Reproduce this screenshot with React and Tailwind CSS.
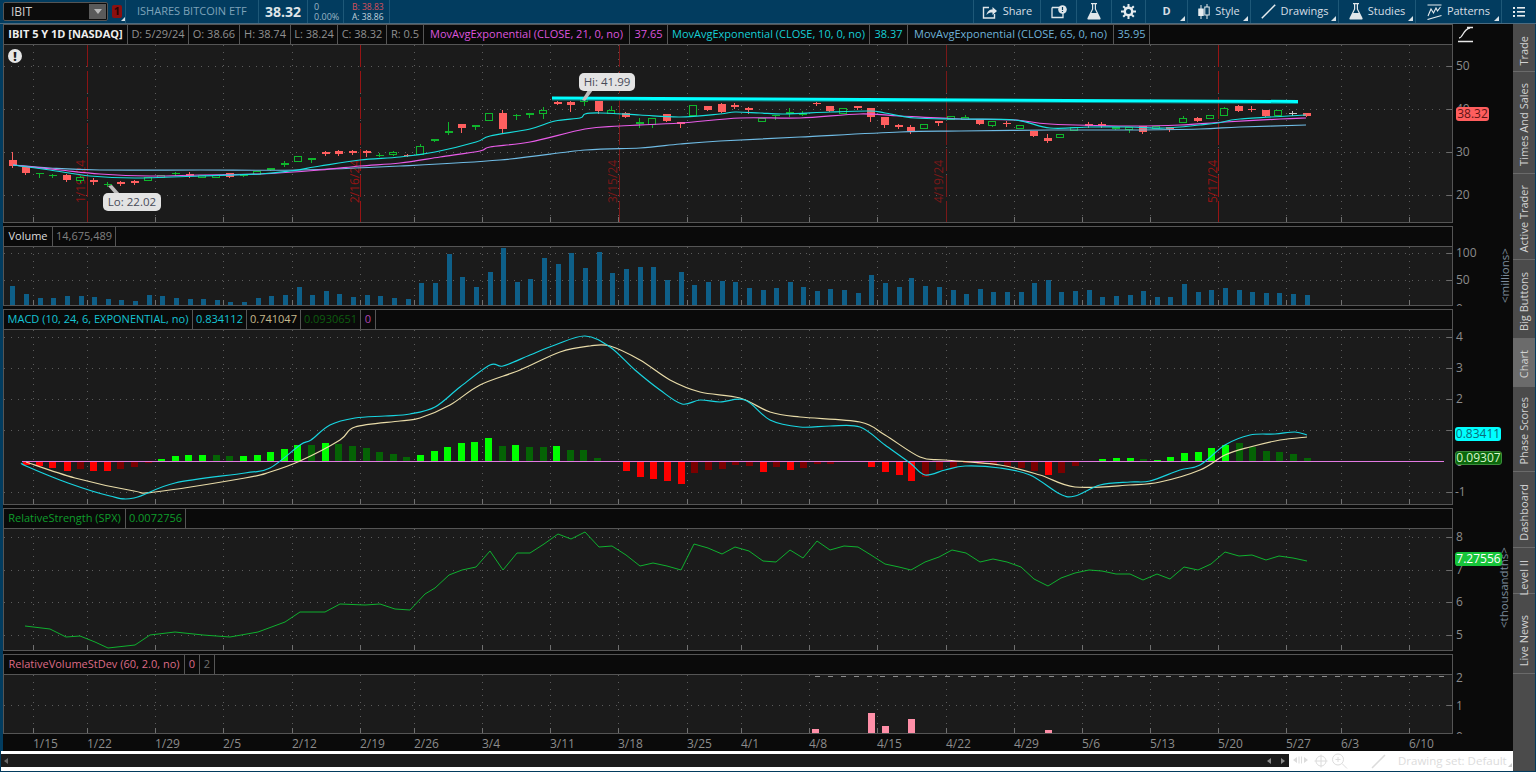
import React from "react";

const DATES = [
  ["1/15", 33], ["1/22", 87], ["1/29", 155], ["2/5", 223], ["2/12", 292], ["2/19", 360], ["2/26", 414], ["3/4", 482],
  ["3/11", 550], ["3/18", 618], ["3/25", 687], ["4/1", 741], ["4/8", 809], ["4/15", 877], ["4/22", 946], ["4/29", 1014],
  ["5/6", 1082], ["5/13", 1150], ["5/20", 1218], ["5/27", 1286], ["6/3", 1341], ["6/10", 1409],
];

// x, body top, body bottom, wick top, wick bottom, kind (r red, g solid green, h hollow, d/n/w doji)
const CANDLES = [
  [13,160,166,152,167,"r"],[26,167,173,167,174,"r"],[40,173,173,173,177,"n"],[53,175,175,174,177,"n"],[67,175,180,174,181,"r"],
  [81,177,180,176,182,"h"],[94,180,182,178,184,"r"],[108,184,184,182,186,"n"],[121,182,184,181,185,"r"],[135,181,183,180,184,"r"],
  [149,177,180,177,180,"h"],[162,175,177,175,177,"h"],[176,173,173,172,175,"n"],[190,174,176,172,177,"r"],[203,175,177,175,177,"h"],
  [217,175,177,175,177,"h"],[230,173,177,173,177,"r"],[244,175,175,174,176,"n"],[258,171,174,171,174,"h"],[271,168,170,168,170,"g"],
  [285,163,165,161,166,"g"],[299,156,161,156,161,"h"],[312,158,160,158,162,"g"],[326,152,154,151,155,"r"],[339,151,154,150,155,"r"],
  [353,151,153,150,154,"r"],[367,151,153,150,156,"r"],[380,155,155,153,156,"n"],[394,152,154,151,155,"h"],[408,155,155,154,156,"d"],
  [421,146,154,144,154,"h"],[435,139,141,139,141,"g"],[449,131,133,122,134,"g"],[462,124,128,124,132,"r"],[476,125,127,125,129,"g"],
  [490,113,120,113,120,"h"],[503,113,129,110,133,"r"],[517,115,115,114,119,"n"],[530,113,115,113,117,"g"],[544,110,113,107,118,"h"],
  [558,102,104,101,104,"r"],[571,102,105,101,111,"r"],[585,99,101,97,105,"h"],[599,101,111,101,113,"r"],[612,110,113,106,113,"h"],
  [626,113,117,112,117,"r"],[640,122,124,118,127,"g"],[653,118,124,118,127,"h"],[667,114,121,114,121,"r"],[681,122,123,122,127,"r"],
  [694,105,115,105,115,"h"],[708,106,110,106,110,"r"],[722,104,112,103,112,"r"],[735,105,107,103,108,"r"],[749,108,110,107,113,"r"],
  [763,118,121,118,121,"h"],[776,115,115,115,119,"n"],[790,112,114,108,116,"g"],[803,113,115,111,115,"g"],[817,103,103,102,105,"d"],
  [830,106,111,106,111,"r"],[844,108,113,108,113,"h"],[858,106,108,106,109,"r"],[871,108,117,108,121,"r"],[885,117,125,117,127,"r"],
  [899,125,127,124,128,"r"],[911,127,131,125,133,"r"],[925,124,128,124,128,"h"],[939,121,123,121,125,"r"],[952,116,119,116,119,"h"],
  [966,117,119,115,119,"h"],[980,119,124,119,124,"r"],[993,121,125,121,126,"h"],[1007,123,123,121,126,"d"],[1021,125,128,125,128,"h"],
  [1034,131,136,131,136,"r"],[1048,138,141,134,142,"r"],[1061,134,137,134,137,"h"],[1075,127,130,127,130,"h"],[1089,124,126,122,127,"r"],
  [1102,124,126,122,127,"r"],[1116,127,129,127,129,"g"],[1130,127,129,127,132,"h"],[1143,126,132,126,133,"r"],[1157,126,127,126,127,"h"],
  [1170,127,129,127,131,"r"],[1184,118,122,116,122,"h"],[1198,118,121,117,121,"r"],[1211,115,118,115,118,"h"],[1225,108,115,107,115,"h"],
  [1239,106,111,105,111,"r"],[1252,109,109,106,111,"d"],[1266,110,116,110,116,"r"],[1279,110,115,110,115,"h"],[1293,113,113,111,115,"w"],
  [1307,113,116,113,116,"r"],
];

const EMA10 = [[13,165],[50,170],[90,176],[135,178],[200,176],[260,174],[290,171],[320,166],[360,160],[400,157],[435,152],[476,142],[490,136],[530,129],[555,121],[580,118],[585,114],[600,113],[640,115],[680,117],[720,114],[735,112],[760,113],[785,114],[830,112],[870,111],[885,113],[915,118],[960,119],[1015,120],[1050,128],[1090,127],[1130,127],[1165,128],[1200,125],[1218,123],[1240,119],[1306,115]];
const EMA21 = [[13,165],[60,170],[100,174],[150,176],[200,175],[260,174],[320,170],[360,166],[400,163],[440,157],[480,151],[490,147],[530,142],[585,129],[620,126],[680,123],[740,118],[800,118],[860,114],[900,116],[960,119],[1015,120],[1050,124],[1130,126],[1180,125],[1225,122],[1280,119],[1306,118]];
const EMA65 = [[13,165],[50,168],[100,170],[200,170],[300,170],[400,166],[500,160],[585,150],[640,148],[680,144],[720,141],[800,137],[900,132],[960,131],[1050,130],[1130,130],[1200,129],[1240,127],[1306,125]];

const VOLUME = [[12,286],[26,294],[40,298],[53,298],[67,296],[81,296],[94,297],[108,299],[121,300],[135,301],[149,295],[162,296],[176,298],[190,299],[203,299],[217,300],[230,302],[244,302],[258,298],[271,296],[285,295],[299,287],[312,295],[326,291],[339,294],[353,297],[367,295],[380,296],[394,298],[408,299],[421,283],[435,283],[449,254],[462,277],[476,287],[490,272],[503,248],[517,282],[530,279],[544,258],[558,264],[571,253],[585,268],[599,252],[612,273],[626,269],[640,267],[653,267],[667,280],[681,272],[694,285],[708,282],[722,281],[735,282],[749,288],[763,290],[776,288],[790,282],[803,287],[817,291],[830,289],[844,290],[858,293],[871,275],[885,283],[899,287],[911,278],[925,286],[939,287],[953,290],[966,294],[980,289],[993,292],[1007,292],[1021,292],[1034,283],[1048,280],[1061,292],[1075,291],[1089,290],[1102,297],[1116,296],[1130,295],[1143,291],[1157,297],[1170,297],[1184,284],[1198,292],[1211,290],[1225,288],[1239,290],[1252,292],[1266,293],[1279,293],[1293,294],[1307,295]];

// x, height above/below the zero line, dim
const HIST = [[26,-4],[39,-5],[52,-7],[67,-10],[80,-8,1],[93,-10],[107,-10],[120,-8,1],[134,-6,1],[148,-2,1],[161,2],[175,5],[188,6],[202,6],[216,6,1],[229,5,1],[243,5],[257,6],[270,9],[284,12],[297,16],[311,16,1],[325,18],[338,17,1],[352,15,1],[366,13,1],[379,9,1],[393,7,1],[406,4,1],[420,6],[434,10],[447,14],[461,18],[474,19],[488,23],[502,15,1],[515,16],[529,14,1],[543,14,1],[556,15],[570,11,1],[583,11,1],[597,3,1],[612,-1,1],[626,-10],[640,-16],[653,-18],[667,-20],[681,-23],[694,-12,1],[708,-9,1],[722,-8,1],[735,-4,1],[749,-5,1],[763,-11],[776,-6,1],[790,-9],[803,-7,1],[817,-3,1],[830,-3,1],[844,-1,1],[858,-1,1],[871,-6],[885,-11],[899,-14],[911,-20],[925,-16,1],[939,-9,1],[953,-7,1],[966,-2,1],[980,-3,1],[993,-4,1],[1007,-5,1],[1021,-7,1],[1034,-10,1],[1048,-14],[1061,-12,1],[1075,-5,1],[1089,-1,1],[1102,2],[1116,3],[1130,3],[1143,2,1],[1157,1],[1170,4],[1184,8],[1198,9],[1211,13],[1225,16],[1239,18,1],[1252,14,1],[1266,10,1],[1279,9,1],[1293,7,1],[1307,3,1]];

const MACD = [[22,463],[26,466],[68,483],[110,496],[134,498],[175,483],[245,473],[270,468],[300,445],[311,440],[330,425],[355,418],[385,416],[410,414],[435,407],[460,387],[490,365],[503,366],[530,355],[555,345],[585,336],[610,347],[635,370],[660,390],[682,404],[700,400],[720,402],[745,400],[770,420],[800,427],[830,426],[860,427],[885,445],[910,463],[925,475],[945,470],[965,466],[1000,468],[1030,475],[1060,494],[1075,496],[1100,485],[1130,482],[1150,481],[1180,470],[1200,465],[1225,445],[1250,435],[1275,434],[1295,432],[1307,435]];
const SIGNAL = [[26,462],[75,478],[134,491],[155,492],[245,478],[270,472],[300,461],[340,440],[355,427],[400,421],[420,418],[450,405],[480,385],[520,370],[560,352],[590,346],[610,346],[640,360],[670,380],[700,392],[740,398],[770,412],[800,417],[860,422],[885,435],[920,457],[945,460],[1000,465],[1040,475],[1075,487],[1130,485],[1160,482],[1200,470],[1225,455],[1250,447],[1280,440],[1307,437]];

const RS = [[25,626],[50,629],[66,637],[80,636],[95,642],[108,648],[135,645],[150,635],[175,632],[203,635],[230,637],[258,632],[285,622],[300,612],[325,612],[340,604],[365,605],[380,604],[395,609],[410,610],[425,594],[435,588],[449,575],[462,570],[476,567],[490,551],[503,570],[517,553],[530,553],[544,544],[558,534],[571,539],[585,532],[599,547],[612,546],[626,555],[640,566],[653,563],[667,566],[681,570],[694,544],[708,548],[722,554],[735,547],[749,551],[763,561],[776,562],[790,550],[803,558],[817,541],[830,550],[844,546],[858,547],[871,555],[885,564],[899,567],[911,570],[925,562],[939,557],[952,550],[966,553],[980,562],[993,559],[1007,562],[1021,567],[1034,579],[1048,586],[1061,578],[1075,573],[1089,570],[1102,571],[1116,574],[1130,574],[1143,580],[1157,574],[1170,579],[1184,567],[1198,570],[1211,564],[1225,552],[1239,556],[1252,555],[1266,560],[1279,556],[1293,558],[1307,561]];

const RVS = [[815,729],[871,713],[885,726],[911,719],[1048,730]];

// label, line x, colour, text baseline x
const MARKS = [["1/19/24",87,"#8a1414",85],["2/16/24",360,"#971414",359],["3/15/24",619,"#7a1818",617],["4/19/24",946,"#7a1818",943],["5/17/24",1218,"#971414",1217]];

const pts = (l) => l.map((p) => p.join(",")).join(" ");

// catmull-rom through the sampled points, the indicator lines are not angular
const smooth = (l) => {
  let d = `M${l[0][0]} ${l[0][1]}`;
  for (let i = 0; i < l.length - 1; i++) {
    const p0 = l[i - 1] || l[i];
    const p1 = l[i];
    const p2 = l[i + 1];
    const p3 = l[i + 2] || p2;
    const c1x = p1[0] + (p2[0] - p0[0]) / 6;
    const c1y = p1[1] + (p2[1] - p0[1]) / 6;
    const c2x = p2[0] - (p3[0] - p1[0]) / 6;
    const c2y = p2[1] - (p3[1] - p1[1]) / 6;
    d += `C${c1x} ${c1y} ${c2x} ${c2y} ${p2[0]} ${p2[1]}`;
  }
  return d;
};

const LEG_MAIN = [
  { t: "IBIT 5 Y 1D [NASDAQ]", c: "w-[124px] text-[#eeeeee] font-bold" },
  { t: "D: 5/29/24", c: "w-[61px] text-[#909090]" },
  { t: "O: 38.66", c: "w-[51px] text-[#909090]" },
  { t: "H: 38.74", c: "w-[51px] text-[#909090]" },
  { t: "L: 38.24", c: "w-[47px] text-[#909090]" },
  { t: "C: 38.32", c: "w-[49px] text-[#909090]" },
  { t: "R: 0.5", c: "w-[37px] text-[#909090]" },
  { t: "MovAvgExponential (CLOSE, 21, 0, no)", c: "w-[206px] text-[#dd55dd]" },
  { t: "37.65", c: "w-[38px] text-[#dd55dd]" },
  { t: "MovAvgExponential (CLOSE, 10, 0, no)", c: "w-[202px] text-[#16cfd6]" },
  { t: "38.37", c: "w-[38px] text-[#16cfd6]" },
  { t: "MovAvgExponential (CLOSE, 65, 0, no)", c: "w-[206px] text-[#6fb2d8]" },
  { t: "35.95", c: "w-[36px] text-[#6fb2d8]" },
];
const LEG_VOL = [
  { t: "Volume", c: "w-[49px] text-[#dddddd]" },
  { t: "14,675,489", c: "w-[63px] text-[#808080]" },
];
const LEG_MACD = [
  { t: "MACD (10, 24, 6, EXPONENTIAL, no)", c: "w-[189px] text-[#14c4d4]" },
  { t: "0.834112", c: "w-[54px] text-[#14c4d4]" },
  { t: "0.741047", c: "w-[54px] text-[#c6b98c]" },
  { t: "0.0930651", c: "w-[60px] text-[#0e5c10]" },
  { t: "0", c: "w-[15px] text-[#b145b1]" },
];
const LEG_RS = [
  { t: "RelativeStrength (SPX)", c: "w-[122px] text-[#0f9c2b]" },
  { t: "0.0072756", c: "w-[60px] text-[#0f9c2b]" },
];
const LEG_RVS = [
  { t: "RelativeVolumeStDev (60, 2.0, no)", c: "w-[181px] text-[#dc6a86]" },
  { t: "0", c: "w-[15px] text-[#dc6a86]" },
  { t: "2", c: "w-[15px] text-[#707070]" },
];

const TABS = [
  { t: "Trade", c: "h-[48px] pt-[6px]" },
  { t: "Times And Sales", c: "h-[102px] pt-[4px]" },
  { t: "Active Trader", c: "h-[86px] pt-[4px]" },
  { t: "Big Buttons", c: "h-[79px] pt-[5px]" },
  { t: "Chart", c: "h-[48px] pt-[4px] bg-[#6b6b6b]" },
  { t: "Phase Scores", c: "h-[85px] pt-[3px]" },
  { t: "Dashboard", c: "h-[76px] pt-[5px]" },
  { t: "Level II", c: "h-[46px] pt-[14px]" },
  { t: "Live News", c: "h-[80px] pt-[15px]" },
];

function Corner() {
  return <span className="absolute right-[2px] bottom-[2px] w-0 h-0 border-l-[5px] border-l-transparent border-b-[5px] border-b-[#d8e2e8]" />;
}

function ToolItem({ w, label, corner, children }) {
  return (
    <div className={`relative h-full flex items-center justify-center gap-[5px] border-l border-[#1e5878] text-[#d6dfe5] text-[11px] ${w}`}>
      {children}
      {label && <span>{label}</span>}
      {corner && <Corner />}
    </div>
  );
}

function TopBar() {
  return (
    <div className="h-[24px] shrink-0 flex items-center bg-[#023c5f] border-b border-[#4b6b80]">
      <div className="ml-[3px] w-[105px] h-[19px] flex items-center justify-between bg-[#0c0c0c] border border-[#555555] rounded-[2px] pl-[7px] pr-[1px] text-[#d0d0d0] text-[12px]">
        <span>IBIT</span>
        <span className="w-[17px] h-[15px] bg-[#5a5a5a] flex items-center justify-center">
          <span className="w-0 h-0 border-x-[4px] border-x-transparent border-t-[5px] border-t-[#b8b8b8]" />
        </span>
      </div>
      <div className="relative ml-[4px] w-[13px] h-full flex items-center">
        <span className="w-[10px] h-[13px] rounded-[2px] bg-[#8c1010] text-[#2a0505] text-[11px] font-bold flex items-center justify-center">1</span>
        <span className="absolute right-[0px] bottom-[2px] w-0 h-0 border-l-[4px] border-l-transparent border-b-[4px] border-b-[#d8e2e8]" />
      </div>
      <div className="h-full w-[133px] flex items-center pl-[11px] border-l border-[#1e5878] text-[#7ea3b9] text-[11px] whitespace-nowrap">ISHARES BITCOIN ETF</div>
      <div className="h-full w-[49px] flex items-center justify-center border-l border-[#1e5878] text-[#dfe5e8] text-[14px] font-bold">38.32</div>
      <div className="h-full w-[36px] flex flex-col justify-center pl-[6px] border-l border-[#1e5878] text-[#9db6c6] text-[9px] leading-[10px]">
        <span>0</span>
        <span>0.00%</span>
      </div>
      <div className="h-full w-[46px] flex flex-col justify-center pl-[8px] border-l border-[#1e5878] text-[8.5px] leading-[10px]">
        <span className="text-[#d8505a]">B: 38.83</span>
        <span className="text-[#c2d2dc]">A: 38.86</span>
      </div>
      <div className="h-full border-l border-[#1e5878]" />
      <div className="ml-auto h-full flex">
        <ToolItem w="w-[67px]" label="Share">
          <svg width="16" height="14" viewBox="0 0 16 14" fill="none" stroke="#dfe6ea" strokeWidth="1.4">
            <path d="M7 2.5H1.5v10.5h11V9" />
            <path d="M4.5 10c.5-3.5 3-5.5 6-5.5V2l4.5 4-4.5 4V7.5c-2.500 0-4.500.5-6 2.500z" fill="#dfe6ea" stroke="none" />
          </svg>
        </ToolItem>
        <ToolItem w="w-[36px]">
          <svg width="16" height="14" viewBox="0 0 16 14" fill="none">
            <path d="M1 2.500h9M1 2.500v10h11V8" stroke="#dfe6ea" strokeWidth="1.300" />
            <circle cx="11.500" cy="4.500" r="4.300" fill="#dfe6ea" />
            <path d="M11.500 2v3M11.500 6v1" stroke="#023c5f" strokeWidth="1.200" />
          </svg>
        </ToolItem>
        <ToolItem w="w-[35px]">
          <svg width="14" height="17" viewBox="0 0 14 17" fill="#dfe6ea">
            <path d="M4 0h6v1.200H9V6l4.500 9c.3.8 0 1.500-1 1.500h-11c-1 0-1.300-.7-1-1.500L5 6V1.200H4zM6.200 1.200v5.100L4.300 10h5.400L7.800 6.300V1.200z" fillRule="evenodd" />
          </svg>
        </ToolItem>
        <ToolItem w="w-[34px]">
          <svg width="15" height="15" viewBox="0 0 15 15">
            <circle cx="7.500" cy="7.500" r="3.700" fill="none" stroke="#e6ecef" strokeWidth="2.400" />
            <path d="M7.500 0v3M7.500 12v3M0 7.500h3M12 7.500h3M2.200 2.200l2.100 2.100M10.700 10.700l2.100 2.100M2.200 12.800l2.100-2.100M10.700 4.300l2.100-2.100" stroke="#e6ecef" strokeWidth="2" />
          </svg>
        </ToolItem>
        <ToolItem w="w-[42px]" corner>
          <span className="font-bold text-[11px]">D</span>
        </ToolItem>
        <ToolItem w="w-[63px]" label="Style" corner>
          <svg width="12" height="16" viewBox="0 0 12 16" fill="none" stroke="#e6ecef">
            <path d="M3 1v14M9 0v15" strokeWidth="1" />
            <rect x="0.800" y="5" width="4.400" height="6.500" fill="#e6ecef" />
            <rect x="6.800" y="3" width="4.400" height="8" fill="#023c5f" />
          </svg>
        </ToolItem>
        <ToolItem w="w-[88px]" label="Drawings" corner>
          <svg width="15" height="15" viewBox="0 0 15 15" fill="none" stroke="#e6ecef" strokeWidth="1.500">
            <path d="M0.800 14.200 14.200 0.800" />
          </svg>
        </ToolItem>
        <ToolItem w="w-[77px]" label="Studies" corner>
          <svg width="14" height="17" viewBox="0 0 14 17" fill="#dfe6ea">
            <path d="M4 0h6v1.200H9V6l4.500 9c.3.8 0 1.500-1 1.500h-11c-1 0-1.300-.7-1-1.500L5 6V1.200H4zM6.200 1.200v5.100L4.300 10h5.400L7.800 6.300V1.200z" fillRule="evenodd" />
          </svg>
        </ToolItem>
        <ToolItem w="w-[86px]" label="Patterns" corner>
          <svg width="15" height="16" viewBox="0 0 15 16" fill="none" stroke="#e6ecef" strokeWidth="1.100">
            <path d="M0.500 1h14M1 12l3-7 2.500 4 2.500-5 1.500 3 3-4M0.500 15.500l14-4" />
          </svg>
        </ToolItem>
        <ToolItem w="w-[35px]">
          <svg width="12" height="12" viewBox="0 0 12 12" fill="#e6ecef">
            <rect x="0" y="1" width="2" height="2" />
            <rect x="4" y="1" width="8" height="1.600" />
            <rect x="0" y="5" width="2" height="2" />
            <rect x="4" y="5" width="8" height="1.600" />
            <rect x="0" y="9" width="2" height="2" />
            <rect x="4" y="9" width="8" height="1.600" />
          </svg>
        </ToolItem>
      </div>
    </div>
  );
}

function Legend({ cells }) {
  return (
    <div className="h-[20px] flex bg-[#0a0a0a] border-b border-[#555555] text-[11px] whitespace-nowrap">
      {cells.map((c, i) => (
        <div key={i} className={`h-full flex items-center justify-center border-r border-[#555555] ${c.c}`}>{c.t}</div>
      ))}
    </div>
  );
}

function Grid({ top, h, ys }) {
  return (
    <g shapeRendering="crispEdges">
      {ys.map((y) => (
        <g key={y}>
          <line x1="4" x2="1452" y1={y + 0.5} y2={y + 0.5} stroke="#5c5c5c" strokeDasharray="1 5.800" />
          <line x1="1447" x2="1452" y1={y + 0.5} y2={y + 0.5} stroke="#6a6a6a" />
        </g>
      ))}
      {DATES.map(([d, x]) => (
        <g key={d}>
          <line x1={x + 0.5} x2={x + 0.5} y1={top} y2={top + h} stroke="#5c5c5c" strokeDasharray="1 5.800" />
          <line x1={x + 0.5} x2={x + 0.5} y1={top + h - 5} y2={top + h} stroke="#707070" />
        </g>
      ))}
    </g>
  );
}

function Pane({ top, plotH, cells, ys, children, axis, overlay, gap }) {
  const paneH = plotH + 22;
  return (
    <div className={`relative flex ${gap}`}>
      <div className="w-[1450px] flex flex-col border border-[#555555] bg-[#1b1b1b]">
        <Legend cells={cells} />
        <svg width="1448" height={plotH} viewBox={`4 ${top + 21} 1448 ${plotH}`} className="block">
          <Grid top={top + 21} h={plotH} ys={ys} />
          {children}
        </svg>
      </div>
      <svg width="60" height={paneH} viewBox={`1453 ${top} 60 ${paneH}`} className="block" fontFamily="'Open Sans', sans-serif" fontSize="12" fill="#8c8c8c">
        {axis}
      </svg>
      {overlay}
    </div>
  );
}

function Candle({ c }) {
  const [x, t, b, wt, wb, k] = c;
  const col = k === "r" || k === "d" ? "#ff5f5f" : k === "w" ? "#c8c8c8" : "#0fb52c";
  return (
    <g shapeRendering="crispEdges">
      <line x1={x - 0.5} x2={x - 0.5} y1={wt} y2={wb + 1} stroke={col} />
      {k === "h" && <rect x={x - 4.5} y={t + 0.5} width="7" height={Math.max(b - t, 2)} fill="#1b1b1b" stroke={col} />}
      {(k === "r" || k === "g") && <rect x={x - 4} y={t} width="8" height={Math.max(b - t, 2)} fill={col} />}
      {(k === "d" || k === "n" || k === "w") && <line x1={x - 4} x2={x + 4} y1={t + 0.5} y2={t + 0.5} stroke={col} />}
    </g>
  );
}

function PriceChart() {
  return (
    <>
      {MARKS.map(([label, x, col, tx]) => (
        <g key={label}>
          <line x1={x + 0.5} x2={x + 0.5} y1="45" y2="222" stroke={col} strokeDasharray="22 4" shapeRendering="crispEdges" />
          <text transform={`translate(${tx} 203) rotate(-90)`} fontFamily="'Open Sans', sans-serif" fontSize="12" fill={col}>{label}</text>
        </g>
      ))}
      {CANDLES.map((c) => <Candle key={c[0]} c={c} />)}
      <path d={smooth(EMA65)} fill="none" stroke="#6fbbe4" strokeWidth="1.200" />
      <path d={smooth(EMA21)} fill="none" stroke="#e85ce8" strokeWidth="1.200" />
      <path d={smooth(EMA10)} fill="none" stroke="#18dede" strokeWidth="1.200" />
      <line x1="552" y1="100" x2="1298" y2="103.500" stroke="#0a7f7f" strokeWidth="1" />
      <line x1="552" y1="98" x2="1298" y2="101.500" stroke="#00ffff" strokeWidth="3" />
      <path d="M108 186l7 8h5l-8-9z" fill="#bdbdbd" />
      <path d="M582 100l6-10h5l-8 11z" fill="#bdbdbd" />
      <circle cx="15" cy="56" r="7" fill="#e6e6e6" />
      <text x="15" y="60.500" textAnchor="middle" fontFamily="'Open Sans', sans-serif" fontWeight="800" fontSize="12" fill="#1b1b1b">!</text>
    </>
  );
}

function Badge({ className, children }) {
  return <div className={`absolute h-[14px] rounded-[3px] flex items-center justify-center text-[12px] leading-none ${className}`}>{children}</div>;
}

function Tooltip({ className, children }) {
  return <div className={`absolute h-[18px] rounded-[5px] bg-[#e3e3e3] text-[#474a58] text-[11.5px] flex items-center justify-center ${className}`}>{children}</div>;
}

function AxisText({ x = 1456, y, children }) {
  return <text x={x} y={y}>{children}</text>;
}

function DateAxis() {
  return (
    <svg width="1450" height="17" viewBox="3 734 1450 17" className="block" fontFamily="'Open Sans', sans-serif" fontSize="12" fill="#8c8c8c">
      {DATES.map(([d, x]) => <text key={d} x={x} y="748">{d}</text>)}
    </svg>
  );
}

function BottomStrip() {
  return (
    <div className="ml-[1px] h-[20px] shrink-0 flex items-stretch bg-white pt-[3px] pb-[4px]">
      <div className="w-[1288px] bg-[#1b1b1b] flex items-center justify-between pl-[3px] pr-[4px]">
        <span className="w-0 h-0 border-y-[3px] border-y-transparent border-r-[4px] border-r-[#6a6a6a]" />
        <span className="flex gap-[10px]">
          <span className="w-0 h-0 border-y-[3px] border-y-transparent border-r-[4px] border-r-[#8a8a8a]" />
          <span className="w-0 h-0 border-y-[3px] border-y-transparent border-l-[4px] border-l-[#8a8a8a]" />
        </span>
      </div>
      <div className="relative flex-1 flex items-center text-[#dcdcdc] text-[11.5px]">
        <svg width="100" height="16" viewBox="0 0 100 16" fill="none" stroke="#dcdcdc" className="ml-[3px] shrink-0">
          <path d="M1 7l4-3v6zM16 7l-4-3v6z" fill="#dcdcdc" stroke="none" />
          <path d="M7 3.500v7M9.500 3.500v7" />
          <circle cx="29" cy="8" r="5" />
          <path d="M29 1.500v13M22.500 8h13" />
          <circle cx="46" cy="6.500" r="5.500" />
          <path d="M46 4v5M43.500 6.500h5M50 10.500l5 5" />
          <path d="M80 15l13-13" strokeWidth="1.500" />
        </svg>
        <span className="ml-[6px] whitespace-nowrap">Drawing set: Default</span>
        <span className="absolute right-[1px] bottom-[0px] w-0 h-0 border-l-[4px] border-l-transparent border-b-[4px] border-b-[#cccccc]" />
      </div>
    </div>
  );
}

export default function App() {
  return (
    <div className="w-[1536px] h-[772px] flex flex-col overflow-hidden bg-[#023c5f] [font-family:'Open_Sans',sans-serif]">
      <TopBar />
      <div className="flex-1 flex min-h-0 pb-[1px]">
        <div className="w-[1513px] flex flex-col">
          <div className="flex-1 ml-[3px] bg-[#0a0a0a]">
            <Pane
              top={24}
              plotH={177}
              cells={LEG_MAIN}
              ys={[66, 109, 152, 195]}
              axis={
                <>
                  <path d="M1458 41.500h15M1467 27.500h6M1459 38c4 0 4-9 11-10" fill="none" stroke="#e8e8e8" strokeWidth="1.300" />
                  <AxisText y={70}>50</AxisText>
                  <AxisText y={113}>40</AxisText>
                  <AxisText y={156}>30</AxisText>
                  <AxisText y={199}>20</AxisText>
                </>
              }
              overlay={
                <>
                  <Tooltip className="left-[100px] top-[169px] w-[58px]">Lo: 22.02</Tooltip>
                  <Tooltip className="left-[576px] top-[49px] w-[56px]">Hi: 41.99</Tooltip>
                  <Badge className="left-[1453px] top-[83px] w-[33px] bg-[#ff5e5e] text-[#5c1414]">38.32</Badge>
                </>
              }
            >
              <PriceChart />
            </Pane>
            <Pane
              top={226}
              plotH={58}
              gap="mt-[3px]"
              cells={LEG_VOL}
              ys={[253, 280]}
              axis={
                <>
                  <AxisText y={257}>100</AxisText>
                  <AxisText y={284}>50</AxisText>
                  <AxisText y={313}>0</AxisText>
                  <text transform="translate(1509 303) rotate(-90)" fontSize="11.500" fill="#7d8c9c">&lt;millions&gt;</text>
                </>
              }
            >
              {VOLUME.map(([x, y]) => <rect key={x} x={x - 2} y={y} width="5" height={305 - y} fill="#0e5f88" shapeRendering="crispEdges" />)}
            </Pane>
            <Pane
              top={309}
              plotH={174}
              gap="mt-[3px]"
              cells={LEG_MACD}
              ys={[337, 368, 399, 430, 492]}
              axis={
                <>
                  <AxisText y={341}>4</AxisText>
                  <AxisText y={372}>3</AxisText>
                  <AxisText y={403}>2</AxisText>
                  <AxisText y={466}>0</AxisText>
                  <AxisText y={496} x={1455}>-1</AxisText>
                </>
              }
              overlay={
                <>
                  <Badge className="left-[1452px] top-[118px] w-[46px] bg-[#00ffff] text-[#0a6c78]">0.83411</Badge>
                  <Badge className="left-[1452px] top-[142px] w-[47px] bg-[#0b680b] border border-[#3c8c3c] text-[#d8f5cc]">0.09307</Badge>
                </>
              }
            >
              {HIST.map(([x, v, dim]) => {
                const col = v > 0 ? (dim ? "#056305" : "#00ff00") : dim ? "#7a0000" : "#ff0000";
                return <rect key={x} x={x - 3} y={v > 0 ? 461 - v : 461} width="7" height={Math.abs(v)} fill={col} shapeRendering="crispEdges" />;
              })}
              <line x1="22" x2="1444" y1="461.500" y2="461.500" stroke="#e27ae2" shapeRendering="crispEdges" />
              <path d={smooth(SIGNAL)} fill="none" stroke="#e8dba8" strokeWidth="1.200" />
              <path d={smooth(MACD)} fill="none" stroke="#18d4e0" strokeWidth="1.200" />
            </Pane>
            <Pane
              top={508}
              plotH={121}
              gap="mt-[3px]"
              cells={LEG_RS}
              ys={[537, 570, 602, 635]}
              axis={
                <>
                  <AxisText y={541}>8</AxisText>
                  <AxisText y={574}>7</AxisText>
                  <AxisText y={606}>6</AxisText>
                  <AxisText y={639}>5</AxisText>
                  <text transform="translate(1508 628) rotate(-90)" fontSize="11.500" fill="#7d8c9c">&lt;thousandths&gt;</text>
                </>
              }
              overlay={<Badge className="left-[1452px] top-[44px] w-[47px] bg-[#17c43a] text-white">7.27556</Badge>}
            >
              <polyline points={pts(RS)} fill="none" stroke="#0fb02f" strokeWidth="1" />
            </Pane>
            <Pane
              top={654}
              plotH={58}
              gap="mt-[3px]"
              cells={LEG_RVS}
              ys={[705]}
              axis={
                <>
                  <AxisText y={682}>2</AxisText>
                  <AxisText y={710}>1</AxisText>
                  <AxisText y={741}>0</AxisText>
                </>
              }
            >
              <line x1="815" x2="1446" y1="676.500" y2="676.500" stroke="#8a8a8a" strokeDasharray="5 8" shapeRendering="crispEdges" />
              {RVS.map(([x, y]) => <rect key={x} x={x - 3} y={y} width="7" height={733 - y} fill="#ff8fa8" shapeRendering="crispEdges" />)}
            </Pane>
            <DateAxis />
          </div>
          <BottomStrip />
        </div>
        <div className="w-[22px] flex flex-col bg-[#4b4b4b] text-[#d2d2d2] text-[11px]">
          {TABS.map((t) => (
            <div key={t.t} className={`flex items-center justify-center border-b border-[#6a6a6a] ${t.c}`}>
              <span className="[writing-mode:vertical-rl] rotate-180 whitespace-nowrap">{t.t}</span>
            </div>
          ))}
          <div className="flex-1" />
        </div>
      </div>
    </div>
  );
}
